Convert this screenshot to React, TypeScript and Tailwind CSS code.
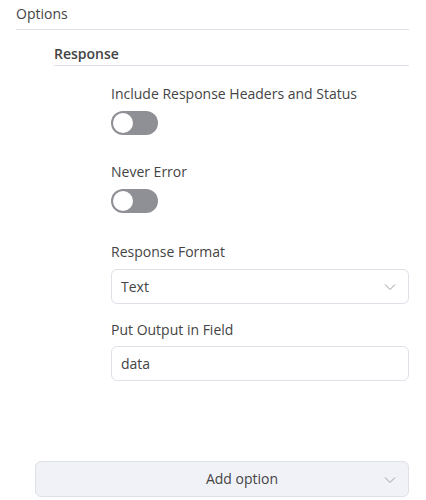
import React from "react";

const Chevron = () => (
  <svg width="12" height="8" viewBox="0 0 12 8" fill="none" className="text-[#9a9ca5]">
    <path d="M1 1.5l5 5 5-5" stroke="currentColor" strokeWidth="1" />
  </svg>
);

const Toggle = () => (
  <div className="relative w-[47px] h-[24px] rounded-full bg-[#8f9096]">
    <div className="absolute left-[2px] top-[2px] w-[20px] h-[20px] rounded-full bg-white" />
  </div>
);

const Label = ({ children }: { children: React.ReactNode }) => (
  <div className="text-sm leading-5 text-[#444]">{children}</div>
);

export default function App() {
  return (
    <div
      className="w-[426px] h-[500px] bg-white pl-4 pr-[17px] flex flex-col"
      style={{ fontFamily: '"Open Sans", sans-serif' }}
    >
      <div className="mt-1 pb-[5px] border-b border-[#dfe1e8] text-sm leading-5 text-[#444]">
        Options
      </div>

      <div className="ml-[38px]">
        <div className="mt-[14px] pb-[1px] border-b border-[#dfe1e8] text-sm leading-5 font-semibold text-[#444]">
          Response
        </div>

        <div className="ml-[57px] flex flex-col">
          <div className="mt-[18px]">
            <Label>Include Response Headers and Status</Label>
            <div className="mt-[7px]">
              <Toggle />
            </div>
          </div>

          <div className="mt-[27px]">
            <Label>Never Error</Label>
            <div className="mt-[7px]">
              <Toggle />
            </div>
          </div>

          <div className="mt-[29px]">
            <Label>Response Format</Label>
            <div className="mt-[7px] h-[35px] rounded-md border border-[#dfe1e8] flex items-center justify-between pl-[9px] pr-[12px] text-sm text-[#444]">
              <span>Text</span>
              <Chevron />
            </div>
          </div>

          <div className="mt-[16px]">
            <Label>Put Output in Field</Label>
            <div className="mt-[6px] h-[35px] rounded-md border border-[#dfe1e8] flex items-center pl-[9px] text-sm text-[#444]">
              data
            </div>
          </div>
        </div>
      </div>

      <div className="mt-[80px] ml-[19px] h-[36px] rounded-md border border-[#dfe1e8] bg-[#f1f2f8] flex items-center relative text-sm text-[#444]">
        <span className="flex-1 text-center pl-[40px]">Add option</span>
        <div className="absolute right-[12px] top-[14px]">
          <Chevron />
        </div>
      </div>
    </div>
  );
}
